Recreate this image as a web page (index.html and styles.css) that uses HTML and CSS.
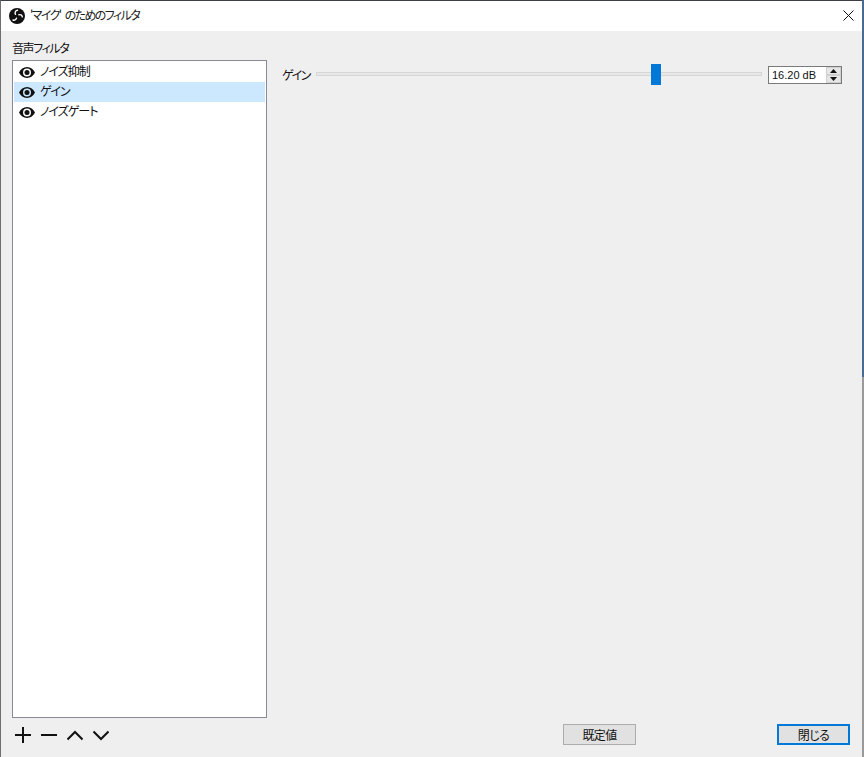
FILE: index.html
```html
<!DOCTYPE html>
<html lang="ja">
<head>
<meta charset="utf-8">
<title>'マイク' のためのフィルタ</title>
<link rel="stylesheet" href="styles.css">
</head>
<body>
<div class="window">
  <header class="titlebar">
    <svg class="app-icon" viewBox="0 0 16 16" aria-hidden="true">
      <circle cx="8" cy="8" r="8" fill="#111"/>
      <g fill="none" stroke="#fff" stroke-width="1.4" stroke-linecap="round">
        <path d="M6.500 6.300A2.600 2.600 0 0 1 8.500 2.300"/>
        <path d="M9.800 6.800A2.600 2.600 0 0 1 13.300 8.800"/>
        <path d="M7.500 10.200A2.600 2.600 0 0 1 4 12"/>
      </g>
    </svg>
    <span class="title">'マイク' のためのフィルタ</span>
    <svg class="close" viewBox="0 0 11 11" aria-hidden="true"><path d="M.5.5l10 10M10.500.5l-10 10" stroke="#111" fill="none"/></svg>
  </header>
  <main class="content">
    <section class="left">
      <div class="group-label">音声フィルタ</div>
      <ul class="filters">
        <li class="filter"><svg class="eye"><use href="#eye"/></svg><span>ノイズ抑制</span></li>
        <li class="filter selected"><svg class="eye"><use href="#eye"/></svg><span>ゲイン</span></li>
        <li class="filter"><svg class="eye"><use href="#eye"/></svg><span>ノイズゲート</span></li>
      </ul>
      <div class="tools">
        <svg class="tool" viewBox="0 0 16 16"><path d="M0 8h16M8 0v16"/></svg>
        <svg class="tool" viewBox="0 0 16 16"><path d="M0 8h16"/></svg>
        <svg class="tool" viewBox="0 0 16 16"><path d="M.5 12.500L8 5l7.500 7.500"/></svg>
        <svg class="tool" viewBox="0 0 16 16"><path d="M.5 4.500L8 12l7.500-7.500"/></svg>
      </div>
    </section>
    <section class="right">
      <div class="prop-row">
        <span class="prop-label">ゲイン</span>
        <div class="slider"><div class="track"></div><div class="thumb"></div></div>
        <div class="spin">
          <span class="spin-value">16.20 dB</span>
          <div class="spin-buttons">
            <span class="spin-btn"><svg viewBox="0 0 7 4"><path d="M3.500 0L7 4H0z"/></svg></span>
            <span class="spin-btn"><svg viewBox="0 0 7 4"><path d="M0 0h7L3.500 4z"/></svg></span>
          </div>
        </div>
      </div>
      <div class="actions">
        <button class="btn">既定値</button>
        <button class="btn primary">閉じる</button>
      </div>
    </section>
  </main>
</div>
<svg class="defs" aria-hidden="true">
  <symbol id="eye" viewBox="0 0 16 11">
    <path d="M8 0C4.500 0 1.600 2.200 0 5.500 1.600 8.800 4.500 11 8 11s6.400-2.200 8-5.500C14.400 2.200 11.500 0 8 0zm0 9.500A4 4 0 1 1 8 1.500a4 4 0 0 1 0 8z" fill="#111"/>
    <circle cx="8" cy="5.500" r="2.500" fill="#111"/>
  </symbol>
</svg>
</body>
</html>
```
FILE: styles.css
```css
* { box-sizing: border-box; }
html, body { margin: 0; height: 100%; }
body {
  background: linear-gradient(#4a6a90 0 377px, #9a9a9a 377px);
  font-family: "Noto Sans CJK JP", "Liberation Sans", sans-serif;
  font-size: 12px;
  font-feature-settings: "palt";
  color: #111;
  overflow: hidden;
}
.window {
  width: 862px;
  height: 757px;
  display: flex;
  flex-direction: column;
  border-top: 1px solid #3c4046;
  border-left: 1px solid #6e6e6e;
  background: #efefef;
}
.titlebar {
  height: 30px;
  flex: none;
  background: #fff;
  display: flex;
  align-items: center;
  padding: 0 8px 0 8px;
}
.app-icon { width: 16px; height: 16px; flex: none; }
.title { margin-left: 5px; font-size: 12px; line-height: 16px; margin-top: -2px; color: #222; letter-spacing: -1.6px; word-spacing: 3px; flex: 1; }
.close { width: 11px; height: 11px; flex: none; margin-top: -2px; }
.content { flex: 1; display: flex; min-height: 0; }
.left { width: 266px; flex: none; padding: 0 0 0 11px; display: flex; flex-direction: column; }
.group-label { height: 29px; padding-top: 8px; line-height: 18px; letter-spacing: -1.4px; }
.filters {
  list-style: none;
  margin: 0;
  padding: 1px;
  width: 255px;
  height: 658px;
  flex: none;
  background: #fff;
  border: 1px solid #8a8a96;
}
.filter { height: 20px; display: flex; align-items: center; padding-left: 5px; letter-spacing: -1px; line-height: 18px; }
.filter span { margin-top: -2px; }
.filter.selected { background: #cce8ff; }
.eye { width: 16px; height: 11px; flex: none; margin-right: 5px; }
.tools { display: flex; gap: 10px; padding: 9px 0 0 3px; }
.tool { width: 16px; height: 16px; flex: none; fill: none; stroke: #111; stroke-width: 2; }
.right { flex: 1; display: flex; flex-direction: column; padding: 0 12px 0 15px; }
.prop-row { display: flex; align-items: center; height: 22px; margin-top: 33px; }
.prop-label { width: 34px; flex: none; letter-spacing: -1.6px; margin-top: -1px; }
.slider { position: relative; width: 446px; height: 22px; flex: none; }
.track {
  position: absolute;
  left: 0;
  right: 0;
  top: 8px;
  height: 4px;
  background: #e7e7e7;
  border: 1px solid #d6d6d6;
}
.thumb { position: absolute; left: 335px; top: 0; width: 10px; height: 21px; background: #0078d7; }
.spin {
  margin-left: 6px;
  width: 74px;
  height: 18px;
  flex: none;
  display: flex;
  border: 1px solid #7a7a7a;
  background: #fff;
}
.spin-value { flex: 1; font-family: "Liberation Sans", sans-serif; font-size: 11px; line-height: 16px; padding-left: 3px; }
.spin-buttons { width: 15px; flex: none; display: flex; flex-direction: column; background: #fff; }
.spin-btn { flex: 1; background: #e6e6e6; display: flex; align-items: center; justify-content: center; border: 1px solid #d0d0d0; }
.spin-btn svg { width: 7px; height: 4px; fill: #111; }
.actions { margin-top: auto; margin-bottom: 12px; display: flex; justify-content: space-between; align-items: center; padding-left: 281px; }
.btn {
  width: 73px;
  height: 21px;
  padding: 0;
  font: inherit;
  line-height: 17px;
  background: #e1e1e1;
  color: #111;
  border: 1px solid #adadad;
  letter-spacing: -.6px;
}
.primary { border: 2px solid #0078d7; }
.defs { position: absolute; width: 0; height: 0; }
```
